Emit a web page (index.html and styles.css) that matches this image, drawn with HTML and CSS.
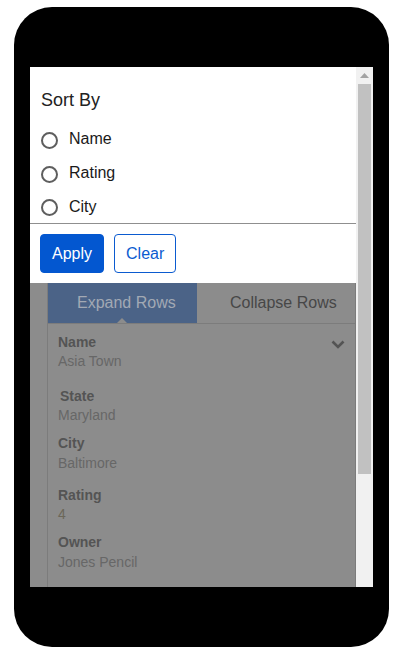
FILE: index.html
```html
<!DOCTYPE html>
<html lang="en">
<head>
<meta charset="utf-8">
<title>Sort By</title>
<link rel="stylesheet" href="styles.css">
</head>
<body>
<div class="phone">
  <div class="screen">
    <div class="viewport">
      <section class="sort-panel">
        <h2 class="sort-title">Sort By</h2>
        <ul class="sort-options">
          <li class="sort-option"><span class="radio"></span><span class="sort-label">Name</span></li>
          <li class="sort-option"><span class="radio"></span><span class="sort-label">Rating</span></li>
          <li class="sort-option"><span class="radio"></span><span class="sort-label">City</span></li>
        </ul>
        <div class="sort-actions">
          <button class="btn btn-primary">Apply</button>
          <button class="btn btn-outline">Clear</button>
        </div>
      </section>
      <section class="page">
        <div class="card">
          <div class="tabs">
            <div class="tab tab-active">Expand Rows</div>
            <div class="tab tab-plain">Collapse Rows</div>
          </div>
          <div class="record">
            <div class="record-head">
              <div class="field">
                <div class="field-label">Name</div>
                <div class="field-value">Asia Town</div>
              </div>
              <svg class="chevron" width="14" height="9" viewBox="0 0 14 9"><path d="M1.5 1.5 L7 7 L12.5 1.5" fill="none" stroke="#545454" stroke-width="2.6"/></svg>
            </div>
            <div class="field field-wide">
              <div class="field-label field-indent">State</div>
              <div class="field-value">Maryland</div>
            </div>
            <div class="field">
              <div class="field-label">City</div>
              <div class="field-value field-value-low">Baltimore</div>
            </div>
            <div class="field field-mid">
              <div class="field-label">Rating</div>
              <div class="field-value field-value-rating">4</div>
            </div>
            <div class="field">
              <div class="field-label">Owner</div>
              <div class="field-value field-value-low">Jones Pencil</div>
            </div>
          </div>
        </div>
      </section>
    </div>
    <div class="scrollbar">
      <div class="sb-arrow"><svg width="9" height="5" viewBox="0 0 9 5"><path d="M0 5 L4.5 0 L9 5 Z" fill="#a3a3a3"/></svg></div>
      <div class="sb-thumb"></div>
    </div>
  </div>
</div>
</body>
</html>
```

FILE: styles.css
```css
* { box-sizing: border-box; }
html, body { margin: 0; padding: 0; background: #ffffff; }
body { font-family: "Liberation Sans", Arial, sans-serif; }

.phone {
  margin: 7px 0 0 14px;
  width: 375px;
  height: 640px;
  background: #000;
  border-radius: 38px;
  padding: 60px 16px;
}

.screen {
  display: flex;
  height: 520px;
  background: #fff;
  overflow: hidden;
}

.viewport {
  flex: 1;
  display: flex;
  flex-direction: column;
  overflow: hidden;
}

/* Sort panel */
.sort-panel {
  background: #fff;
  padding: 23px 0 0 0;
}
.sort-title {
  margin: 0 0 0 11px;
  font-size: 18px;
  line-height: 20px;
  font-weight: normal;
  color: #222;
}
.sort-options {
  list-style: none;
  margin: 12px 0 0 0;
  padding: 0 0 0 11px;
  height: 102px;
  border-bottom: 1px solid #8f8f8f;
}
.sort-option {
  display: flex;
  align-items: center;
  height: 34px;
}
.sort-option:last-child { height: 33px; }
.radio {
  width: 17px;
  height: 17px;
  border: 2px solid #5e5e5e;
  border-radius: 50%;
  margin-top: 2px;
}
.sort-label {
  margin-left: 11px;
  font-size: 16px;
  color: #1a1a1a;
}
.sort-actions {
  display: flex;
  gap: 10px;
  padding: 10px 10px 10px 10px;
}
.btn {
  height: 39px;
  padding: 0 11px;
  border-radius: 4px;
  font-family: "Liberation Sans", Arial, sans-serif;
  font-size: 16px;
}
.btn-primary {
  background: #0357d0;
  color: #fff;
  border: 1px solid #0357d0;
}
.btn-outline {
  background: #fff;
  color: #0b5bd0;
  border: 1px solid #0b5bd0;
  padding: 0 11px;
}

/* Dimmed page */
.page {
  flex: 1;
  background: #8c8c8c;
  padding-left: 17px;
}
.card {
  height: 100%;
  border-left: 1px solid #7c7c7c;
  border-right: 1px solid #7c7c7c;
}
.tabs {
  display: flex;
  height: 41px;
  border-bottom: 1px solid #7c7c7c;
}
.tab {
  font-size: 16px;
  line-height: 40px;
  position: relative;
}
.tab-active {
  width: 149px;
  background: #4b6387;
  color: #a2a9b4;
  padding-left: 29px;
}
.tab-active::after {
  content: "";
  position: absolute;
  left: 69px;
  bottom: 0;
  border-left: 5px solid transparent;
  border-right: 5px solid transparent;
  border-bottom: 5px solid #8c8c8c;
}
.tab-plain {
  flex: 1;
  color: #474747;
  padding-left: 33px;
}

.record {
  padding: 9px 10px 0 10px;
}
.record-head {
  display: flex;
  justify-content: space-between;
  align-items: flex-start;
}
.chevron { margin-top: 7px; }
.field { margin-top: 10px; }
.record-head .field { margin-top: 0; }
.field-wide { margin-top: 17px; }
.field-mid { margin-top: 14px; }
.field-label {
  font-size: 14px;
  font-weight: bold;
  line-height: 18px;
  color: #545454;
}
.field-indent { margin-left: 2px; }
.field-value {
  font-size: 14px;
  line-height: 18px;
  margin-top: 1px;
  color: #676767;
}
.field-value-low { margin-top: 2px; }
.field-value-rating { color: #6b6759; }

/* Scrollbar */
.scrollbar {
  width: 17px;
  background: #f1f1f1;
  display: flex;
  flex-direction: column;
}
.sb-arrow {
  height: 17px;
  display: flex;
  align-items: center;
  justify-content: center;
}
.sb-thumb {
  height: 390px;
  margin: 0 2px;
  background: #c1c1c1;
}
```
